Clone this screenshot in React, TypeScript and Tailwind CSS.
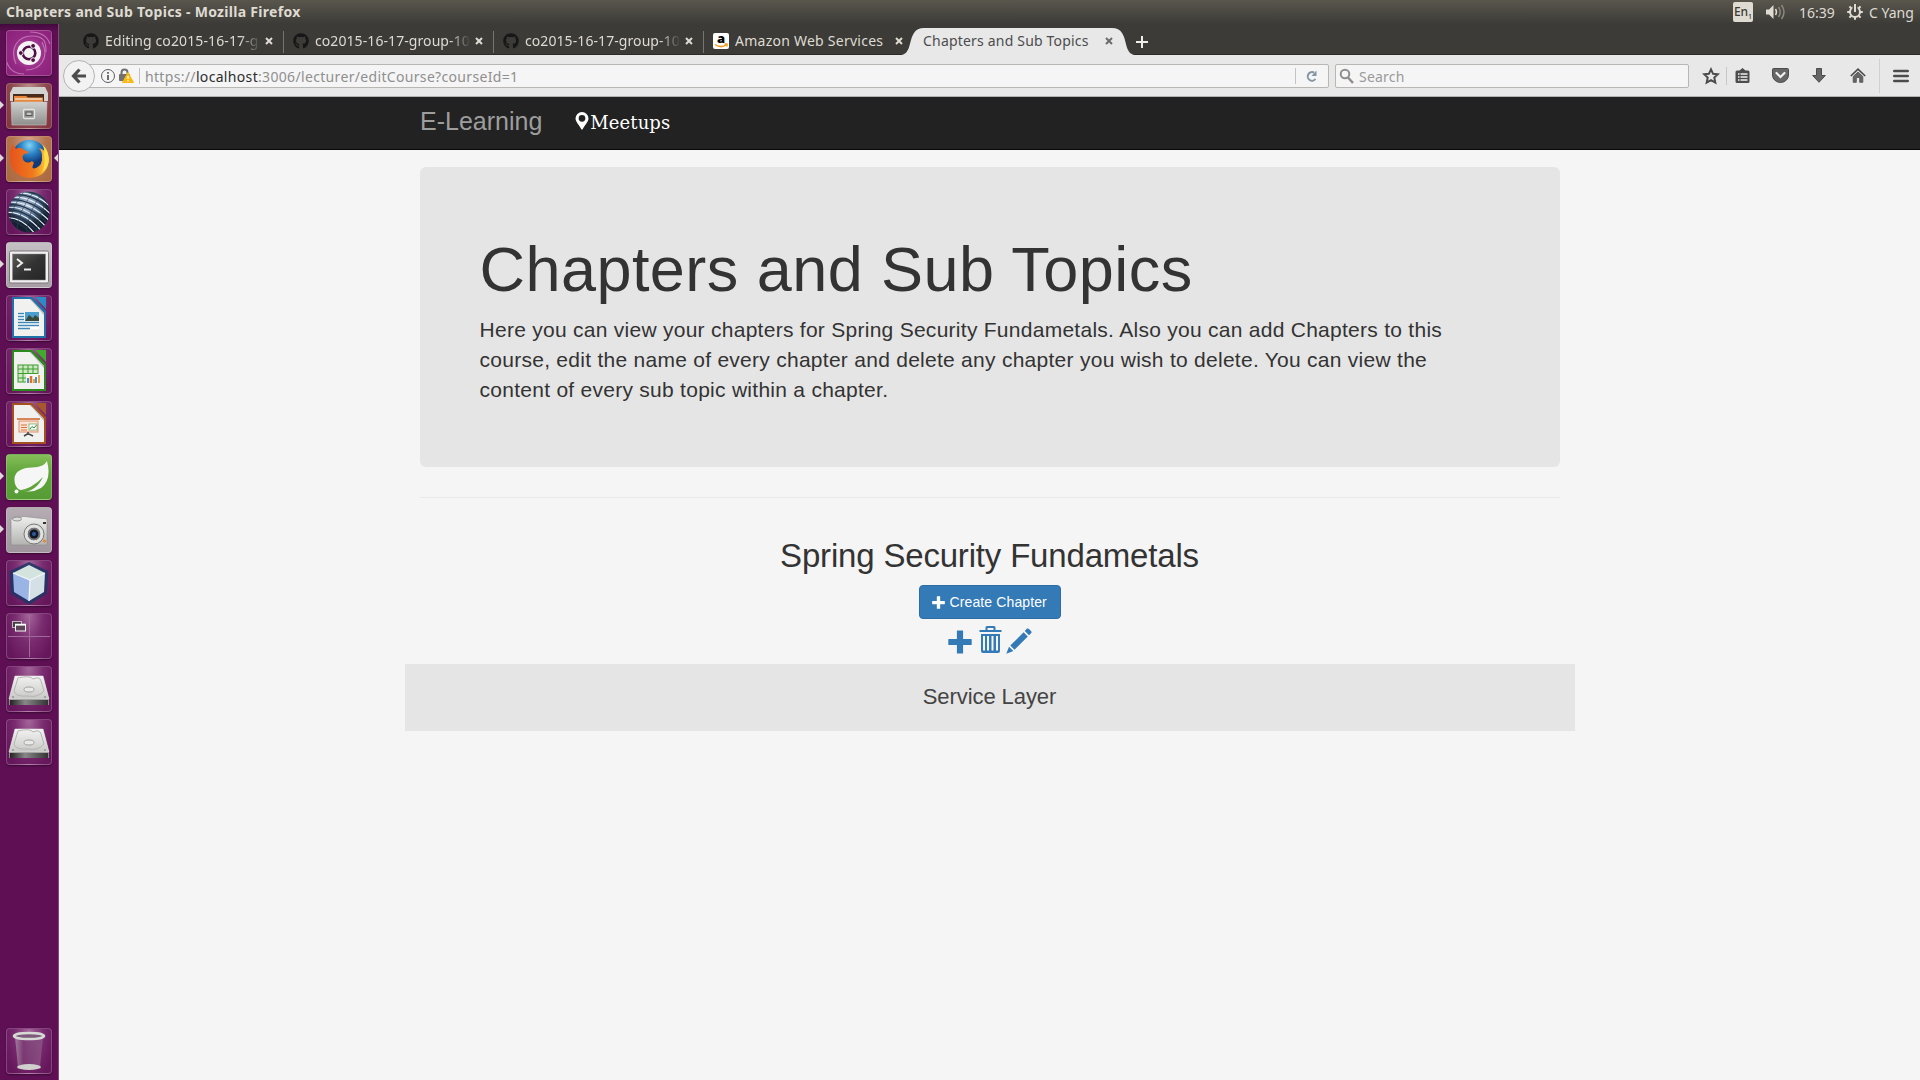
import React from "react";
import { FaGithub } from "react-icons/fa";

type Kid = { children?: React.ReactNode };
const UI = "font-['Noto_Sans',sans-serif]";
const HV = "font-['Liberation_Sans',Arial,sans-serif]";

function Tile({ bg, left, right, children }: Kid & { bg: string; left?: boolean; right?: boolean }) {
  return (
    <div className="relative h-[46px] w-full shrink-0 pl-[6px]">
      {left && <span className="absolute left-0 top-[18px] border-y-[4px] border-l-[4px] border-y-transparent border-l-[#dcdad8]" />}
      {right && <span className="absolute left-[54px] top-[18px] border-y-[4px] border-r-[4px] border-y-transparent border-r-[#dcdad8]" />}
      <div className={"h-[46px] w-[46px] overflow-hidden rounded-[4px] border border-white/20 shadow-[0_1px_2px_rgba(0,0,0,0.4)] " + bg}>
        <svg width="46" height="46" viewBox="0 0 46 46" className="-ml-px -mt-px block">
          {children}
        </svg>
      </div>
    </div>
  );
}

const GLASS = "bg-[radial-gradient(ellipse_at_50%_0%,#a4669a_0%,#7a2c70_45%,#66175b_85%)]";

function Doc({ c, tip, children }: Kid & { c: string; tip: string }) {
  return (
    <>
      <path d="M6 2H26L40 16V43H6Z" fill={c} />
      <path d="M8 4H24L38 18V41H8Z" fill="#f1f1ef" />
      <path d="M29 2H40V14Z" fill={tip} />
      <path d="M25 4L38 18V20L24 4Z" fill="#b9b9b9" />
      {children}
    </>
  );
}

function Disk() {
  return (
    <>
      <defs>
        <linearGradient id="dk" x1="0" y1="0" x2="0" y2="1"><stop offset="0" stopColor="#f2f2f2" /><stop offset="1" stopColor="#c8c8c6" /></linearGradient>
        <linearGradient id="dk2"><stop offset="0" stopColor="#222" /><stop offset=".4" stopColor="#888" /><stop offset="1" stopColor="#333" /></linearGradient>
      </defs>
      <path d="M9 10H37L43 33V39H3V33Z" fill="#8f8f8d" />
      <path d="M9 10H37L43 33H3Z" fill="url(#dk)" stroke="#e8e8e8" strokeWidth=".5" />
      <rect x="4" y="34" width="38" height="5" fill="url(#dk2)" />
      <path d="M12 12Q24 9 27 13Q34 10 35 15L38 25Q32 32 22 30Q9 31 8 25Z" fill="none" stroke="#b5b5b3" strokeWidth="1" />
      <ellipse cx="23" cy="23.500" rx="5" ry="2.500" fill="#e9e9e9" stroke="#a2a2a0" />
      <path d="M6 31h2M38 31h2" stroke="#777" />
    </>
  );
}

function Launcher() {
  return (
    <aside className="flex w-[59px] shrink-0 flex-col gap-[7px] border-r border-[#8d4384] bg-[linear-gradient(180deg,#430a3d_0px,#5e0f54_8px,#5f1055_100%)] pb-[6px] pt-[6px]">
      <Tile bg="bg-[radial-gradient(circle,#c05ab0_0%,#952a84_55%,#8a2079_100%)]">
        <g fill="none" stroke="#d9a0d2" strokeOpacity=".6" strokeWidth="1.200">
          <path d="M10 34C3 18 12 6 26 6S40 14 40 22" /><path d="M36 12C44 28 34 40 20 40" /><path d="M0 30Q4 44 18 44" /><path d="M24 2Q40 2 44 14" />
        </g>
        <circle cx="23" cy="23" r="12" fill="#f6f3f5" />
        <circle cx="23" cy="23" r="6.300" fill="none" stroke="#4d0f45" strokeWidth="2.600" />
        <g fill="#4d0f45" stroke="#f6f3f5" strokeWidth="1"><circle cx="14.800" cy="23" r="2.400" /><circle cx="27.100" cy="15.900" r="2.400" /><circle cx="27.100" cy="30.100" r="2.400" /></g>
      </Tile>
      <Tile left bg="bg-[radial-gradient(ellipse_at_50%_0%,#b98a8a_0%,#8d4a50_55%,#83343f_100%)]">
        <defs><linearGradient id="fc" x1="0" y1="0" x2="0" y2="1"><stop offset="0" stopColor="#d0d0ce" /><stop offset="1" stopColor="#8e8e8c" /></linearGradient></defs>
        <path d="M7 4H39L42 10V18H4V10Z" fill="#d3d3d1" />
        <rect x="7" y="11" width="31" height="9" fill="#4a2c1c" />
        <path d="M8 13H20L22 14.500H37V20H8Z" fill="#e8873c" /><path d="M9 16H36" stroke="#f6dcc0" strokeWidth="1.500" />
        <path d="M5 19H41L40 42H6Z" fill="url(#fc)" stroke="#c8c8c6" strokeWidth=".6" />
        <rect x="17.500" y="26.500" width="11" height="9" rx="1" fill="#9a9a98" stroke="#e4e4e4" strokeWidth="1.300" /><rect x="20" y="29" width="6" height="3.500" fill="#c4c4c2" stroke="#555" />
      </Tile>
      <Tile left right bg="bg-[radial-gradient(ellipse_at_50%_0%,#d2a48c_0%,#b4744e_55%,#a9683e_100%)]">
        <defs>
          <radialGradient id="ff" cx=".5" cy=".15"><stop offset="0" stopColor="#7fd4f4" /><stop offset=".5" stopColor="#2b83c6" /><stop offset="1" stopColor="#103a7c" /></radialGradient>
          <linearGradient id="fo"><stop offset="0" stopColor="#e5531c" /><stop offset=".6" stopColor="#f07a1e" /><stop offset="1" stopColor="#fbd83a" /></linearGradient>
        </defs>
        <circle cx="23.500" cy="22" r="18" fill="url(#ff)" />
        <path d="M7 8L10 13Q14 10 18 14L23 16Q21 18 18 18Q15 21 18 25Q22 28 26 25L28 27Q24 34 30 32Q37 29 36 20Q36 15 33 12Q41 14 43 23Q42 41 23 42Q5 40 4 23Q3 14 7 8Z" fill="url(#fo)" />
        <path d="M36 8Q44 15 42.500 26Q41 33 36 36Q40 28 38 19Q39 13 36 8Z" fill="#fbdc4a" />
      </Tile>
      <Tile bg={GLASS}>
        <defs>
          <radialGradient id="gl" cx=".45" cy=".3"><stop offset="0" stopColor="#b8c8dc" /><stop offset=".6" stopColor="#54708f" /><stop offset="1" stopColor="#14202f" /></radialGradient>
          <clipPath id="gc"><circle cx="23" cy="23" r="20.500" /></clipPath>
        </defs>
        <circle cx="23" cy="23" r="20.500" fill="url(#gl)" />
        <g clipPath="url(#gc)" fill="none">
          <g stroke="#22344a" strokeWidth="1.300"><path d="M0 11Q24 8 46 30M0 16Q22 13 44 37M0 21Q20 19 40 42M0 26Q18 25 34 46M0 31Q14 31 26 46M4 6Q28 3 46 23M10 2Q32 1 46 16M0 36Q10 37 18 46" /></g>
          <g stroke="#e6eef6" strokeWidth="1.200"><path d="M0 13.500Q23 10.500 45 33.500M0 18.500Q21 16 42 40M0 23.500Q19 22 37 44M0 28.500Q16 28 30 46M2 8.500Q26 5.500 46 26.500M8 4Q30 2 46 19.500" /></g>
          <g stroke="#2a3d54" strokeOpacity=".6"><path d="M30 0Q12 20 10 46M38 2Q22 20 20 46M44 8Q32 24 30 46M20 0Q4 18 3 40" /></g>
        </g>
      </Tile>
      <Tile left bg="bg-[linear-gradient(180deg,#c5c0c4,#a79fa5)]">
        <defs><linearGradient id="te" x1="0" y1="0" x2="1" y2="1"><stop offset="0" stopColor="#5a5a58" /><stop offset=".5" stopColor="#333" /><stop offset="1" stopColor="#252525" /></linearGradient></defs>
        <rect x="3.500" y="9" width="39" height="32" rx="1.500" fill="#f0f0f0" stroke="#7b777a" />
        <rect x="6.500" y="12" width="33" height="26" fill="url(#te)" stroke="#888" strokeWidth=".5" />
        <path d="M11 17L16 21L11 25M18 27.500H25" fill="none" stroke="#eee" strokeWidth="2" />
      </Tile>
      <Tile bg={GLASS}>
        <Doc c="#1f73a8" tip="#2b8bc4">
          <rect x="12" y="17" width="21" height="17" fill="#fff" />
          <path d="M12 18.500H18M12 21.500H18M12 24.500H18M12 27.500H33M12 30.500H33M12 33.500H24" stroke="#3e88b8" strokeWidth="1.600" />
          <rect x="19" y="17" width="14" height="9" fill="#4b9fd0" /><path d="M19 26L23 20L27 23L29 20L33 23V26Z" fill="#3a4a3a" />
        </Doc>
      </Tile>
      <Tile bg={GLASS}>
        <Doc c="#2b8a1c" tip="#41a92c">
          <rect x="12" y="17" width="20" height="17" fill="#cfe8c4" stroke="#3f9d31" />
          <path d="M12 21H32M12 25.500H32M12 30H32M17 17V34M22 17V34M27 17V34" stroke="#3f9d31" />
          <rect x="20" y="26" width="14" height="9" fill="#f7f7f7" /><path d="M22 35V30M30 35V29" stroke="#4a90c8" strokeWidth="2" /><path d="M25 35V28" stroke="#e0702a" strokeWidth="2.500" /><path d="M28 35V31M33 35V27" stroke="#e9a13a" strokeWidth="2" />
        </Doc>
      </Tile>
      <Tile bg={GLASS}>
        <Doc c="#a5501f" tip="#a8572a">
          <path d="M11 18H34" stroke="#d9855a" strokeWidth="2" /><rect x="13" y="20" width="19" height="11" fill="#fbe2d2" stroke="#e0906a" />
          <path d="M15 24H21M15 26.500H21M15 29H21" stroke="#d4743e" /><rect x="23" y="23" width="8" height="6" fill="#fff" stroke="#3f9d50" strokeWidth=".6" /><path d="M24 28L26 25.500L28 27L30.500 24" stroke="#2e8b3a" fill="none" />
          <path d="M18 35L22 32.500L27 35M22 31V34" stroke="#444" strokeWidth="1.500" fill="none" />
        </Doc>
      </Tile>
      <Tile left bg="bg-[linear-gradient(180deg,#86bd58,#5fa53a_40%,#579b36)]">
        <path d="M41 7Q38 13 26 13.500Q10 14 8.500 24Q8 32 13 35.500Q25 40 35 34Q46 26 41 7Z" fill="#f6f6f6" />
        <path d="M11 37Q26 35 37 23Q29 40 12 37.500Z" fill="#5fa53a" /><circle cx="10.500" cy="37.500" r="2" fill="#f6f6f6" />
      </Tile>
      <Tile left bg="bg-[linear-gradient(180deg,#b5adb3,#a0959d)]">
        <defs><linearGradient id="cm" x1="0" y1="0" x2="0" y2="1"><stop offset="0" stopColor="#efefed" /><stop offset="1" stopColor="#b3b3b1" /></linearGradient></defs>
        <path d="M5 12L18 9.500L41 12V38H5Z" fill="url(#cm)" stroke="#8a8a8a" strokeWidth=".6" />
        <ellipse cx="11" cy="12" rx="4.500" ry="2" fill="#ddd" stroke="#777" strokeWidth=".7" />
        <circle cx="28" cy="27" r="10" fill="#e0e0de" stroke="#777" /><circle cx="28" cy="27" r="7" fill="#777" stroke="#eee" /><circle cx="28" cy="27" r="4.500" fill="#101826" /><circle cx="28" cy="27" r="2" fill="#2c5c9c" />
        <rect x="37" y="15" width="3" height="2" fill="#333" /><circle cx="38.500" cy="34" r="1.500" fill="#e8862a" />
      </Tile>
      <Tile bg={GLASS}>
        <path d="M23 3.500L41 12L39.500 33L23 43L6 33L5 12Z" fill="#1f3566" stroke="#1f3566" strokeWidth="3" strokeLinejoin="round" opacity=".85" />
        <path d="M23 5L39 13L24 20L7 13Z" fill="#d3e3de" /><path d="M7 13L24 20L23 41L8 32Z" fill="#9ab4e6" /><path d="M39 13L24 20L23 41L38 32Z" fill="#d4e0e6" />
        <path d="M7 13L24 20L39 13M24 20L23 41" stroke="#f4f8fa" strokeWidth="1.300" fill="none" />
      </Tile>
      <Tile bg={GLASS}>
        <path d="M2 23.500H44M23.500 2V44" stroke="#a06a99" />
        <rect x="6.500" y="8.500" width="9" height="6" fill="#4d3a4a" stroke="#bbb" /><rect x="9.500" y="12" width="10" height="6" fill="#5c4459" stroke="#f4f4f4" /><path d="M9 11.500H20" stroke="#fff" strokeWidth="1.500" />
      </Tile>
      <Tile bg={GLASS}><Disk /></Tile>
      <Tile bg={GLASS}><Disk /></Tile>
      <div className="flex-1" />
      <Tile bg={GLASS}>
        <defs><linearGradient id="tr"><stop offset="0" stopColor="#a78aa4" /><stop offset=".3" stopColor="#7c3a74" /><stop offset="1" stopColor="#8a5584" /></linearGradient></defs>
        <path d="M9 9L12 39Q23 44 34 39L37 9Z" fill="url(#tr)" opacity=".85" />
        <ellipse cx="23" cy="39" rx="12" ry="3" fill="#d0d0ce" />
        <ellipse cx="23" cy="8" rx="15" ry="3" fill="#7d5a79" stroke="#d8d8d6" strokeWidth="2.500" />
      </Tile>
    </aside>
  );
}

function Close({ c }: { c: string }) {
  return (
    <svg width="8" height="8" viewBox="0 0 8 8" className="relative shrink-0"><path d="M1 1L7 7M7 1L1 7" stroke={c} strokeWidth="2" /></svg>
  );
}

function Tab({ icon, text, track, last }: { icon: React.ReactNode; text: string; track: string; last?: boolean }) {
  return (
    <div className={"relative flex h-[31px] w-[210px] shrink-0 items-center pl-[10px] pt-[2px] " + (last ? "" : "after:absolute after:right-[-1px] after:top-[7px] after:h-[22px] after:w-px after:bg-[#77756f]")}>
      {icon}
      <span className={"ml-[6px] w-[155px] overflow-hidden whitespace-nowrap text-[14px] leading-5 text-[#dfdbd2] " + (last ? "" : "[mask-image:linear-gradient(90deg,#000_87%,rgba(0,0,0,0.1)_99%)] ") + track}>{text}</span>
      <span className="w-[5px]" />
      <Close c="#dfdbd2" />
    </div>
  );
}

const gh = <FaGithub size={16} color="#181717" className="shrink-0" />;

function Browser() {
  return (
    <>
      <div className="flex h-[31px] shrink-0 bg-[#3c3b37] pl-[14px] shadow-[inset_0_-1px_0_#2b2a27]">
        <Tab icon={gh} text="Editing co2015-16-17-g" track="tracking-[0.12px]" />
        <Tab icon={gh} text="co2015-16-17-group-10" track="tracking-[0.08px]" />
        <Tab icon={gh} text="co2015-16-17-group-10" track="tracking-[0.08px]" />
        <Tab
          last
          icon={
            <span className="relative flex h-4 w-4 shrink-0 items-center justify-center rounded-[2px] bg-white">
              <span className="-mt-[5px] font-['Open_Sans',sans-serif] text-[13px] font-extrabold leading-none text-black">a</span>
              <svg className="absolute left-0 top-0" width="16" height="16"><path d="M2 11.500Q8 15.500 13 12M11.500 11H14V13.500" fill="none" stroke="#f39c1f" strokeWidth="1.500" /></svg>
            </span>
          }
          text="Amazon Web Services"
          track="tracking-[0.25px]"
        />
        <div className="relative flex h-[31px] w-[210px] shrink-0 items-center pl-[10px] pt-[2px]">
          <svg className="absolute -left-[12px] top-[4px]" width="234" height="27" viewBox="0 0 234 27">
            <path d="M0 27C10 26 8 12 13 5Q16 0 23 0H211Q218 0 221 5C226 12 224 26 234 27Z" fill="#e8e8e8" />
          </svg>
          <span className="relative w-[175px] whitespace-nowrap text-[14px] leading-5 tracking-[0.19px] text-[#4c4c4c]">Chapters and Sub Topics</span>
          <span className="w-[7px]" />
          <Close c="#6b6b6b" />
        </div>
        <svg className="ml-[13px] mt-[12px]" width="12" height="12"><path d="M6 0V12M0 6H12" stroke="#eeeeec" strokeWidth="2" /></svg>
      </div>
      <div className="relative flex h-[42px] shrink-0 items-center border-b border-[#b4b2af] bg-[#e8e8e8]">
        <div className="relative z-10 ml-[4px] flex h-8 w-8 shrink-0 items-center justify-center rounded-full border border-[#b5b3b0] bg-[#f2f2f2]">
          <svg width="16" height="16" viewBox="0 0 16 16"><path d="M8.500 1.500L2.500 8L8.500 14.500M3 8H15" fill="none" stroke="#4c4c4c" strokeWidth="3.200" /></svg>
        </div>
        <div className="-ml-4 flex h-6 w-[1250px] shrink-0 items-center rounded-r-[2px] border border-[#b9b7b4] bg-[#f5f5f5] pl-[20px]">
          <svg width="16" height="16" viewBox="0 0 16 16"><circle cx="8" cy="8" r="6.500" fill="none" stroke="#5e5e5e" /><path d="M8 7V12M8 4V5.800" stroke="#5e5e5e" strokeWidth="1.800" /></svg>
          <svg className="ml-[2px]" width="16" height="16" viewBox="0 0 16 16">
            <path d="M3.500 7V4.500a3 3 0 0 1 6 0V7" fill="none" stroke="#707070" strokeWidth="2" /><rect x="1" y="6" width="11" height="7" rx="1" fill="#707070" />
            <path d="M10 4.500L15.500 14.500H4.500Z" fill="#fbb80e" stroke="#fbb80e" strokeLinejoin="round" /><path d="M10 8V11M10 12.200V13.700" stroke="#fff" strokeWidth="1.400" />
          </svg>
          <span className="ml-[5px] h-4 w-px bg-[#c2c2c2]" />
          <span className="ml-[5px] mt-[2px] flex-1 whitespace-nowrap text-[14px] leading-5 tracking-[0.33px] text-[#8f8f8f]">https://<span className="text-[#2d2d2d]">localhost</span>:3006/lecturer/editCourse?courseId=1</span>
          <span className="h-4 w-px bg-[#c4c4c4]" />
          <span className="flex w-[32px] justify-center">
            <svg width="14" height="14" viewBox="0 0 14 14"><path d="M10.500 10A4.300 4.300 0 1 1 9.200 3.700" fill="none" stroke="#8496a5" strokeWidth="2" /><path d="M11.500 1.500V7H6.500Z" fill="#8496a5" /></svg>
          </span>
        </div>
        <div className="ml-[6px] flex h-[24px] w-[354px] shrink-0 items-center rounded-[2px] border border-[#b9b7b4] bg-[#f5f5f5] pl-[3px]">
          <svg width="16" height="16" viewBox="0 0 16 16"><circle cx="6" cy="6" r="4.300" fill="none" stroke="#8e8e8e" strokeWidth="2" /><path d="M9 9.500L14 15" stroke="#8e8e8e" strokeWidth="2.500" /></svg>
          <span className="ml-[4px] mt-[2px] text-[14px] leading-5 tracking-[0.2px] text-[#9a9a9a]">Search</span>
        </div>
        <div className="flex flex-1 items-center">
          <svg className="ml-[13px]" width="18" height="18" viewBox="0 0 18 18"><path d="M9 2.300L11.100 6.800L15.800 7.300L12.300 10.600L13.300 15.600L9 13.100L4.700 15.600L5.700 10.600L2.200 7.300L6.900 6.800Z" fill="none" stroke="#4c4c4c" strokeWidth="2" /></svg>
          <span className="ml-[6px] h-[18px] w-px bg-[#c8c8c8]" />
          <svg className="ml-[8px]" width="15" height="15" viewBox="0 0 15 15"><path d="M4.500 2.500L7.500 0L10.500 2.500H13Q14.500 2.500 14.500 4V13.500Q14.500 15 13 15H2Q.5 15 .5 13.500V4Q.5 2.500 2 2.500Z" fill="#4c4c4c" /><path d="M3 6H4.500M5.500 6H12.500M3 9H4.500M5.500 9H12.500M3 12H4.500M5.500 12H12.500" stroke="#f0f0f0" strokeWidth="1.500" /></svg>
          <svg className="ml-[22px]" width="17" height="15" viewBox="0 0 17 15"><path d="M1.500 .5H15.500Q16.500 .5 16.500 1.500V7A8 7.500 0 0 1 .5 7V1.500Q.5 .5 1.500 .5Z" fill="#666" stroke="#4c4c4c" /><path d="M4.500 5L8.500 9L12.500 5" fill="none" stroke="#f0f0f0" strokeWidth="2.200" strokeLinecap="round" /></svg>
          <svg className="ml-[23px]" width="14" height="15" viewBox="0 0 14 15"><path d="M4.500 .5H9.500V7.500H13.300L7 14.300L.7 7.500H4.500Z" fill="#666" stroke="#4c4c4c" /></svg>
          <svg className="ml-[24px]" width="16" height="15" viewBox="0 0 16 15"><path d="M.8 8L8 1.200L15.200 8" fill="none" stroke="#4c4c4c" strokeWidth="1.700" /><path d="M3.200 8.500L8 4L12.800 8.500V14.300H9.700V9.500H6.300V14.300H3.200Z" fill="#666" stroke="#4c4c4c" strokeWidth=".8" /></svg>
          <span className="ml-[13px] h-[34px] w-px bg-[#d0d0d0]" />
          <svg className="ml-[13px]" width="16" height="14" viewBox="0 0 16 14"><path d="M1.300 2H14.700M1.300 7H14.700M1.300 12H14.700" stroke="#4c4c4c" strokeWidth="2.600" strokeLinecap="round" /></svg>
        </div>
      </div>
    </>
  );
}

function Plus({ s, className }: { s: number; className?: string }) {
  return (
    <svg className={className} width={s} height={s} viewBox="0 0 24 24"><path d="M9.500 0.500h5q.6 0 .6.600V9h8q.6 0 .6.600v4.800q0 .6-.6.600h-8v8q0 .6-.6.600h-5q-.6 0-.6-.6v-8h-8q-.6 0-.6-.6V9.600q0-.6.6-.6h8V1.100q0-.6.600-.6z" fill="currentColor" /></svg>
  );
}

function Page() {
  return (
    <main className={"flex flex-1 flex-col items-center bg-[#f5f5f5] text-[#333] " + HV}>
      <nav className="flex h-[53px] w-full shrink-0 border-b border-[#080808] bg-[#222] pl-[361px]">
        <span className="mt-[8px] whitespace-nowrap text-[25px] leading-8 text-[#9d9d9d]">E-Learning</span>
        <span className="ml-[33px] mt-[12px] flex text-white">
          <svg className="mt-[3px]" width="14" height="18" viewBox="0 0 14 18"><path fillRule="evenodd" d="M7 0A6.500 6.500 0 0 1 13.500 6.500C13.500 10 9.500 13 7.500 17.500H6.500C4.500 13 .5 10 .5 6.500A6.500 6.500 0 0 1 7 0ZM7 3A3.300 3.300 0 1 0 7 9.700A3.300 3.300 0 0 0 7 3Z" fill="#fff" /></svg>
          <span className="ml-px font-['DejaVu_Serif',serif] text-[18px] leading-7 tracking-[0.1px]">Meetups</span>
        </span>
      </nav>
      <section className="mt-[17px] h-[300px] w-[1140px] shrink-0 rounded-[6px] bg-[#e5e5e5] px-[60px] pt-[67px]">
        <h1 className="whitespace-nowrap text-[63px] leading-[70px] tracking-[0.45px]">Chapters and Sub Topics</h1>
        <p className="mt-[11px] whitespace-nowrap text-[21px] leading-[30px] tracking-[0.27px]">
          Here you can view your chapters for Spring Security Fundametals. Also you can add Chapters to this<br />
          course, edit the name of every chapter and delete any chapter you wish to delete. You can view the<br />
          content of every sub topic within a chapter.
        </p>
      </section>
      <hr className="mt-[30px] w-[1140px] shrink-0 border-[#e9e9e9]" />
      <h2 className="mt-[38px] whitespace-nowrap text-[33px] leading-[40px] tracking-[-0.18px]">Spring Security Fundametals</h2>
      <button className="mt-[9px] flex h-[34px] w-[142px] shrink-0 items-center rounded-[4px] border border-[#2e6da4] bg-[#337ab7] pl-[12px] text-[14px] tracking-[0.12px] text-white">
        <Plus s={13} className="mr-[5px]" />Create Chapter
      </button>
      <div className="mt-[7px] flex h-[38px] shrink-0 text-[#337ab7]">
        <Plus s={24} className="mt-[4px]" />
        <svg className="ml-[7px]" width="23" height="27" viewBox="0 0 23 27"><path fillRule="evenodd" d="M6.500 4V1.500Q6.500 0 8 0H15Q16.500 0 16.500 1.500V4H22.500V6H.500V4ZM8.500 4H14.500V2H8.500ZM2 8H21V25Q21 27 19 27H4Q2 27 2 25ZM4 10V24.500H6V10ZM8 10V24.500H10V10ZM12.500 10V24.500H14.500V10ZM17 10V24.500H19V10Z" fill="currentColor" /></svg>
        <svg className="ml-[4px] mt-[2px]" width="26" height="26" viewBox="0 0 26 26"><path d="M21 .6Q22 0 23 1L25.200 3.200Q26 4.200 25.200 5L23 7.200L18.800 3ZM17.600 4.300L21.800 8.500L8.500 21.800L4.300 17.600ZM3 18.700L7.400 23L.3 25.800Z" fill="currentColor" /></svg>
      </div>
      <div className="flex h-[67px] w-[1170px] shrink-0 items-center justify-center bg-[#e5e5e5] pb-[2px] text-[22px] tracking-[-0.08px] text-[#444]"><span>Service Layer</span></div>
    </main>
  );
}

export default function App() {
  return (
    <div className={"flex h-[1080px] w-[1920px] flex-col overflow-hidden " + UI}>
      <header className="flex h-6 shrink-0 items-center bg-[linear-gradient(180deg,#59564d,#3c3b37)] pl-[6px] text-[14px] text-[#dfdbd2]">
        <span className="flex-1 whitespace-nowrap text-[14px] font-bold leading-5 tracking-[0.3px]">Chapters and Sub Topics - Mozilla Firefox</span>
        <span className="flex h-5 w-5 items-center justify-center rounded-[2px] bg-[#dfdbd2] text-[12px] font-medium leading-none text-[#3c3b37]">En<span className="mt-2 text-[7px]">1</span></span>
        <svg className="ml-[12px]" width="21" height="20" viewBox="0 0 21 20"><path d="M1 7.500H4L8.500 3V17L4 12.500H1Z" fill="#dfdbd2" /><path d="M10.500 7Q12.500 10 10.500 13" fill="none" stroke="#dfdbd2" strokeWidth="1.500" /><path d="M13.500 5Q17 10 13.500 15M16.500 3Q21.500 10 16.500 17" fill="none" stroke="#8a877e" strokeWidth="1.500" /></svg>
        <span className="ml-[13px] w-[37px]">16:39</span>
        <svg className="ml-[10px]" width="18" height="18" viewBox="-9 -9 18 18"><circle r="5" fill="none" stroke="#dfdbd2" strokeWidth="2" /><path d="M0 -8V-3" stroke="#4a4841" strokeWidth="5" /><path d="M0 -8V0M-7.800 0H-5M5 0H7.800M0 5V7.800M-5.600 -5.600L-3.800 -3.800M5.600 -5.600L3.800 -3.800M-5.600 5.600L-3.800 3.800M5.600 5.600L3.800 3.800" stroke="#dfdbd2" strokeWidth="2" /></svg>
        <span className="ml-[5px] w-[51px] whitespace-nowrap">C Yang</span>
      </header>
      <div className="flex flex-1">
        <Launcher />
        <div className="flex min-w-0 flex-1 flex-col"><Browser /><Page /></div>
      </div>
    </div>
  );
}
